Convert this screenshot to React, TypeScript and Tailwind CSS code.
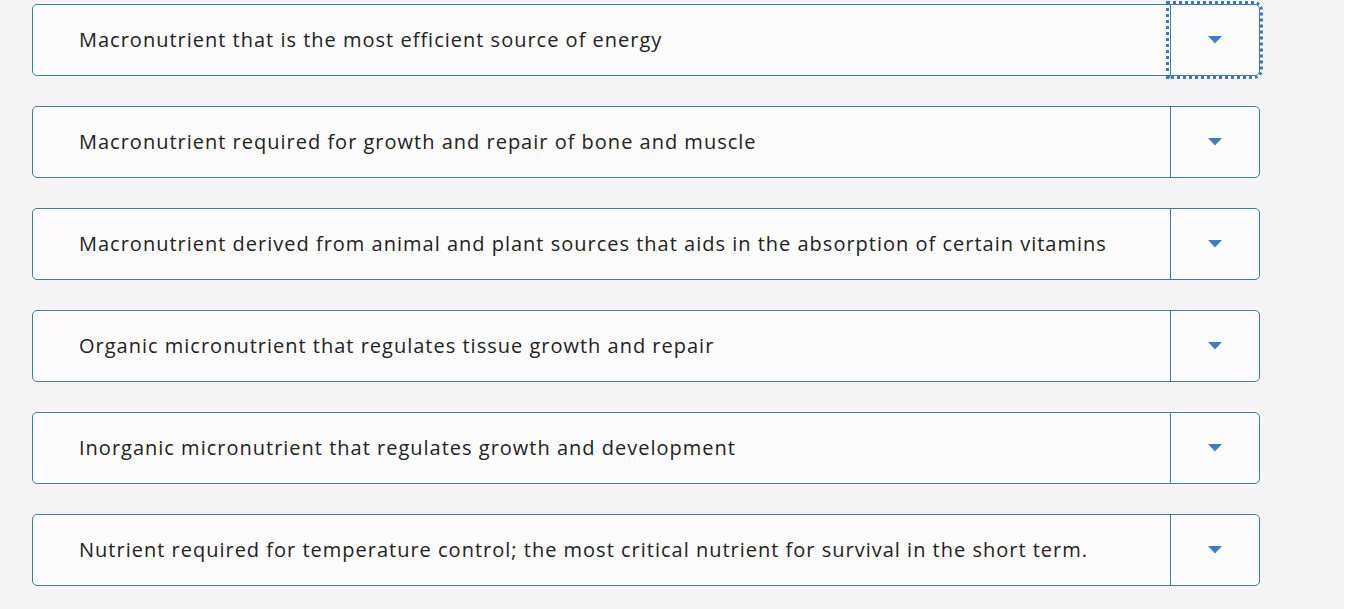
import React from 'react';

const items = [
  'Macronutrient that is the most efficient source of energy',
  'Macronutrient required for growth and repair of bone and muscle',
  'Macronutrient derived from animal and plant sources that aids in the absorption of certain vitamins',
  'Organic micronutrient that regulates tissue growth and repair',
  'Inorganic micronutrient that regulates growth and development',
  'Nutrient required for temperature control; the most critical nutrient for survival in the short term.',
];

export default function App() {
  return (
    <div className="flex h-[609px] w-[1357px] bg-white" style={{ fontFamily: '"Open Sans", sans-serif' }}>
      <div className="flex w-[1344px] flex-col gap-[30px] bg-[#f5f5f5] pl-[32px] pt-[4px]">
        {items.map((text, i) => (
          <div key={i} className="flex h-[72px] w-[1228px] rounded-[5px] border border-[#3b78c3] bg-[#fcfcfc]">
            <div className="flex flex-1 items-center pb-[1px] pl-[46px] text-[20px] tracking-[1px] text-[#222]">{text}</div>
            <div
              className={`flex w-[89px] items-center justify-center rounded-r-[5px] border-l border-[#3b78c3] ${
                i === 0 ? 'outline-[3px] outline-dotted outline-[#3b78c3] outline-offset-[1px]' : ''
              }`}
            >
              <svg width="14" height="8" viewBox="0 0 14 8">
                <path d="M0 0 L14 0 L7 7.5 Z" fill="#3d7cc9" />
              </svg>
            </div>
          </div>
        ))}
      </div>
    </div>
  );
}
